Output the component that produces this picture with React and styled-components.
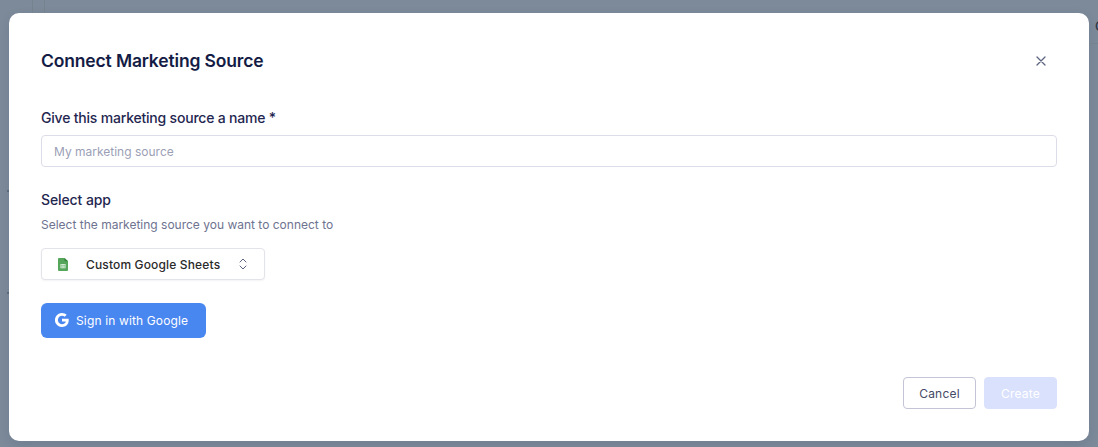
import React from "react";
import styled, { createGlobalStyle } from "styled-components";

const Global = createGlobalStyle`
  html, body { margin: 0; padding: 0; height: 100%; }
  body { font-family: Inter, "Liberation Sans", sans-serif; background: #7c8a9a; overflow: hidden; }
  * { box-sizing: border-box; }
`;

const Backdrop = styled.div`
  position: relative;
  width: 1098px;
  height: 447px;
  padding: 13px 9px 6px;
  background: #7c8a9a;
  overflow: hidden;
`;

const GhostLine = styled.span`
  position: absolute;
  top: 0;
  left: ${(p) => p.$x}px;
  width: 1px;
  height: 13px;
  background: #75838f;
`;

const GhostRule = styled.span`
  position: absolute;
  top: 43px;
  left: 1089px;
  width: 9px;
  height: 1px;
  background: #75838f;
`;

const GhostTick = styled.span`
  position: absolute;
  top: ${(p) => p.$y}px;
  left: 7px;
  width: 2px;
  height: 2px;
  background: #5a6878;
`;

const GhostLetter = styled.span`
  position: absolute;
  top: 18px;
  left: 1095px;
  font-size: 13px;
  line-height: 16px;
  font-weight: 500;
  color: #2c3648;
`;

const Modal = styled.div`
  display: flex;
  flex-direction: column;
  width: 1080px;
  height: 428px;
  padding: 32px;
  background: #fff;
  border-radius: 10px;
  box-shadow: 0 4px 12px rgba(20, 28, 69, 0.1);
`;

const Header = styled.header`
  display: flex;
  align-items: center;
  justify-content: space-between;
  height: 30px;
  padding-top: 1px;
`;

const Title = styled.h2`
  margin: 0;
  font-size: 17.5px;
  line-height: 30px;
  font-weight: 600;
  letter-spacing: -0.15px;
  color: #141c45;
`;

const CloseButton = styled.button`
  display: flex;
  align-items: center;
  justify-content: center;
  width: 16px;
  height: 16px;
  margin-right: 8px;
  padding: 0;
  border: 0;
  background: none;
  color: #5d6480;
`;

const Label = styled.label`
  display: block;
  font-size: 14px;
  line-height: 20px;
  font-weight: 500;
  letter-spacing: ${(p) => p.$spacing || "-0.2px"};
  color: #1f2750;
  margin: ${(p) => p.$top}px 0 0;
`;

const TextInput = styled.input`
  display: block;
  width: 100%;
  height: 32px;
  margin-top: 7px;
  padding: 0 12px;
  border: 1px solid #dcdde8;
  border-radius: 4px;
  font: 400 12px Inter, "Liberation Sans", sans-serif;
  color: #1a2247;
  outline: none;
  &::placeholder { color: #9b9fb6; opacity: 1; }
`;

const Hint = styled.p`
  margin: 6px 0 0;
  font-size: 12px;
  line-height: 18px;
  color: #6e7390;
`;

const SelectBox = styled.button`
  display: flex;
  align-items: center;
  width: 224px;
  height: 32px;
  margin-top: 14px;
  padding: 0 17px 0 16px;
  background: #fff;
  border: 1px solid #e3e3ea;
  border-radius: 4px;
  box-shadow: 0 1px 2px rgba(20, 28, 69, 0.05);
  font: 500 12px Inter, "Liberation Sans", sans-serif;
  letter-spacing: 0.15px;
  color: #2a2a2a;
`;

const SelectLabel = styled.span`
  flex: 1;
  margin-left: 18px;
  text-align: left;
  white-space: nowrap;
`;

const GoogleButton = styled.button`
  display: flex;
  align-items: center;
  gap: 7px;
  width: 165px;
  height: 35px;
  margin-top: 23px;
  padding: 0 0 1px 14px;
  background: #4886f0;
  border: 0;
  border-radius: 6px;
  font: 400 12px Inter, "Liberation Sans", sans-serif;
  letter-spacing: 0.14px;
  color: #fff;
`;

const Footer = styled.footer`
  display: flex;
  justify-content: flex-end;
  gap: 8px;
  margin-top: auto;
`;

const FooterButton = styled.button`
  width: 73px;
  height: 32px;
  padding: 0;
  border-radius: 4px;
  border: 1px solid ${(p) => (p.$primary ? "#d9e1fd" : "#c3c4d6")};
  background: ${(p) => (p.$primary ? "#d9e1fd" : "#fff")};
  color: ${(p) => (p.$primary ? "#fff" : "#454a66")};
  font: 400 12px Inter, "Liberation Sans", sans-serif;
  letter-spacing: 0.2px;
`;

const SheetIcon = () => (
  <svg width="10" height="13" viewBox="0 0 10 14" preserveAspectRatio="none" style={{ flex: "none" }}>
    <path d="M1 0h5.5L10 3.5V13a1 1 0 0 1-1 1H1a1 1 0 0 1-1-1V1a1 1 0 0 1 1-1z" fill="#55a65a" />
    <path d="M6.5 0L10 3.5H7.3a.8.8 0 0 1-.8-.8z" fill="#35803c" />
    <path d="M2.5 6.5h5v4.5h-5z M3.2 8.3h1.4V7.2H3.2z M5.4 8.3h1.4V7.2H5.4z M3.2 10.3h1.4V9.1H3.2z M5.4 10.3h1.4V9.1H5.4z" fill="#e8f5e9" fillRule="evenodd" />
  </svg>
);

const Chevrons = () => (
  <svg width="8" height="12" viewBox="0 0 8 12" fill="none" stroke="#5d6480" strokeWidth="1" strokeLinecap="round" strokeLinejoin="round">
    <path d="M1 4L4 1l3 3" />
    <path d="M1 8l3 3 3-3" />
  </svg>
);

const GoogleG = () => (
  <svg width="14" height="14" viewBox="0 0 24 24" fill="#fff" style={{ flex: "none" }}>
    <path d="M23.5 12.3c0-.9-.1-1.7-.2-2.5H12v4.7h6.5c-.3 1.5-1.1 2.8-2.4 3.6v3h3.9c2.3-2.1 3.5-5.1 3.5-8.8z" />
    <path d="M12 24c3.2 0 6-1.1 8-2.9l-3.9-3c-1.1.7-2.5 1.2-4.1 1.2-3.1 0-5.8-2.1-6.7-5H1.3v3.1C3.3 21.3 7.3 24 12 24z" />
    <path d="M5.3 14.3c-.5-1.5-.5-3.1 0-4.6V6.6h-4a12 12 0 0 0 0 10.8z" />
    <path d="M12 4.8c1.8 0 3.3.6 4.6 1.8l3.4-3.4C17.9 1.2 15.2 0 12 0 7.3 0 3.3 2.7 1.3 6.6l4 3.1c.9-2.9 3.6-4.9 6.7-4.9z" />
  </svg>
);

const CloseIcon = () => (
  <svg width="10" height="10" viewBox="0 0 10 10" fill="none" stroke="currentColor" strokeWidth="1.3" strokeLinecap="round">
    <path d="M1 1l8 8M9 1L1 9" />
  </svg>
);

export default function App() {
  return (
    <>
      <Global />
      <Backdrop>
        <GhostLine $x={32} />
        <GhostLine $x={44} />
        <GhostRule />
        <GhostTick $y={190} />
        <GhostTick $y={292} />
        <GhostLetter>C</GhostLetter>
        <Modal>
          <Header>
            <Title>Connect Marketing Source</Title>
            <CloseButton aria-label="Close"><CloseIcon /></CloseButton>
          </Header>
          <Label $top={33}>Give this marketing source a name *</Label>
          <TextInput placeholder="My marketing source" />
          <Label $top={23} $spacing="-0.1px">Select app</Label>
          <Hint>Select the marketing source you want to connect to</Hint>
          <SelectBox>
            <SheetIcon />
            <SelectLabel>Custom Google Sheets</SelectLabel>
            <Chevrons />
          </SelectBox>
          <GoogleButton><GoogleG />Sign in with Google</GoogleButton>
          <Footer>
            <FooterButton>Cancel</FooterButton>
            <FooterButton $primary>Create</FooterButton>
          </Footer>
        </Modal>
      </Backdrop>
    </>
  );
}
